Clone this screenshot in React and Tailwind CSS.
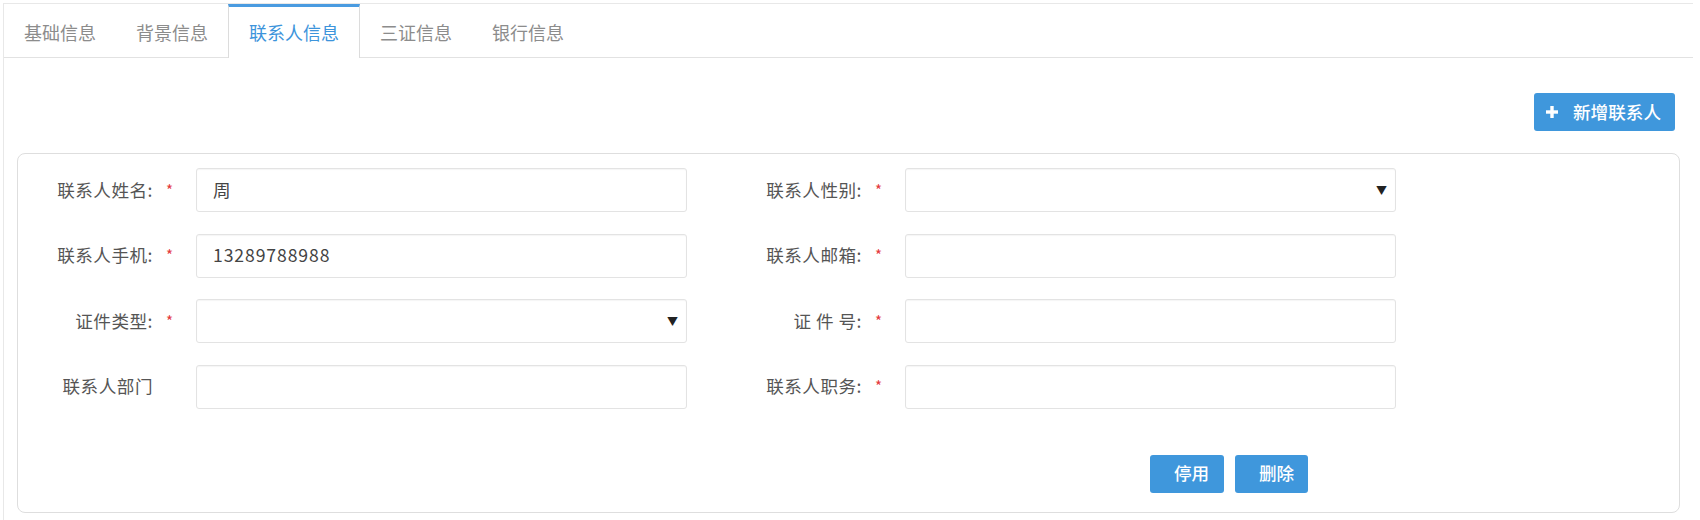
import React from "react";

const tabs = ["基础信息", "背景信息", "联系人信息", "三证信息", "银行信息"];

const Field = ({ label, required, value, select, labelWidth }) => (
  <div className="flex items-center">
    <div className={`${labelWidth} text-right text-[#555] whitespace-pre tracking-[0.5px]`}>{label}</div>
    <div className="w-[43px] pl-[13px] text-[#e4393c] text-[15px]">{required ? "*" : ""}</div>
    <div className="w-[491px] h-[44px] border border-[#e3e3e3] rounded-[3px] shadow-[inset_0_1px_1px_rgba(0,0,0,0.04)] flex items-center justify-between pl-[16px] pr-[8px] text-[#444]">
      <span className="tracking-[0.9px]">{value}</span>
      {select && <span className="text-[11px] text-[#222]">▼</span>}
    </div>
  </div>
);

const App = () => {
  const rows = [
    [
      { label: "联系人姓名:", required: true, value: "周" },
      { label: "联系人性别:", required: true, select: true },
    ],
    [
      { label: "联系人手机:", required: true, value: "13289788988" },
      { label: "联系人邮箱:", required: true },
    ],
    [
      { label: "证件类型:", required: true, select: true },
      { label: "证 件 号:", required: true },
    ],
    [
      { label: "联系人部门", required: false },
      { label: "联系人职务:", required: true },
    ],
  ];

  return (
    <div className="w-[1700px] h-[520px] bg-white overflow-hidden font-['Noto_Sans_CJK_SC','Microsoft_YaHei',sans-serif] text-[17.6px]">
      <div className="ml-[3px] mt-[3px] w-[1690px] h-[517px] border-l border-t border-[#e8e8e8]">
        {/* tabs */}
        <div className="flex h-[54px] border-b border-[#e2e2e2]">
          {tabs.map((t, i) =>
            i === 2 ? (
              <div
                key={t}
                className="px-[20px] flex items-center bg-white border-x border-[#dcdcdc] border-t-[3px] border-t-[#4a9be0] -mb-px text-[#3d94db] text-[18px]"
              >
                {t}
              </div>
            ) : (
              <div key={t} className="px-[20px] pt-[3px] flex items-center text-[#8c8c8c] text-[18px]">
                {t}
              </div>
            )
          )}
        </div>

        <div className="px-[13px]">
          <div className="flex justify-end pt-[35px] pr-[5px]">
            <button className="h-[38px] w-[141px] bg-[#3f97dc] rounded-[3px] text-white flex items-center pl-[12px] gap-[15px] font-medium">
              <svg width="12" height="12" viewBox="0 0 12 12">
                <rect x="4.3" y="0" width="3.4" height="12" fill="#fff" />
                <rect x="0" y="4.3" width="12" height="3.4" fill="#fff" />
              </svg>
              新增联系人
            </button>
          </div>

          {/* contact card */}
          <div className="mt-[22px] h-[360px] border border-[#dedede] rounded-[8px] pt-[14px]">
            <div className="flex flex-col gap-[21.5px]">
              {rows.map((r, i) => (
                <div key={i} className="flex">
                  <Field {...r[0]} labelWidth="w-[135px]" />
                  <Field {...r[1]} labelWidth="w-[175px]" />
                </div>
              ))}
            </div>
            <div className="flex gap-[11px] pl-[1132px] mt-[46px]">
              <button className="h-[38px] w-[74px] pl-[24px] text-left bg-[#3f97dc] rounded-[3px] text-white font-medium">
                停用
              </button>
              <button className="h-[38px] w-[73px] pl-[24px] text-left bg-[#3f97dc] rounded-[3px] text-white font-medium">
                删除
              </button>
            </div>
          </div>
        </div>
      </div>
    </div>
  );
};

export default App;
